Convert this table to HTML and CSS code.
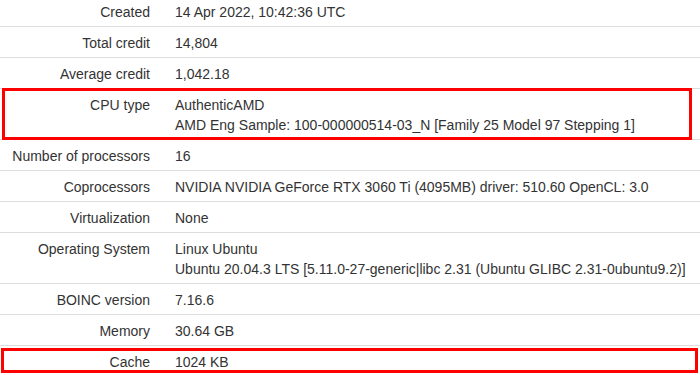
FILE: index.html
```html
<!DOCTYPE html>
<html>
<head>
<meta charset="utf-8">
<link rel="stylesheet" href="styles.css">
</head>
<body>
<div class="sheet">
  <table class="info">
    <tr><th>Created</th><td>14 Apr 2022, 10:42:36 UTC</td></tr>
    <tr><th>Total credit</th><td>14,804</td></tr>
    <tr><th>Average credit</th><td>1,042.18</td></tr>
    <tr><th>CPU type</th><td>AuthenticAMD<br>AMD Eng Sample: 100-000000514-03_N [Family 25 Model 97 Stepping 1]</td></tr>
    <tr><th>Number of processors</th><td>16</td></tr>
    <tr><th>Coprocessors</th><td>NVIDIA NVIDIA GeForce RTX 3060 Ti (4095MB) driver: 510.60 OpenCL: 3.0</td></tr>
    <tr><th>Virtualization</th><td>None</td></tr>
    <tr><th>Operating System</th><td>Linux Ubuntu<br>Ubuntu 20.04.3 LTS [5.11.0-27-generic|libc 2.31 (Ubuntu GLIBC 2.31-0ubuntu9.2)]</td></tr>
    <tr><th>BOINC version</th><td>7.16.6</td></tr>
    <tr><th>Memory</th><td>30.64 GB</td></tr>
    <tr><th>Cache</th><td>1024 KB</td></tr>
  </table>
  <div class="mark mark-cpu"></div>
  <div class="mark mark-cache"></div>
</div>
</body>
</html>
```
FILE: styles.css
```css
html, body {
  margin: 0;
  padding: 0;
  background: #fff;
  overflow: hidden;
}
.sheet {
  position: relative;
  width: 700px;
  height: 375px;
  overflow: hidden;
}
.info {
  width: 700px;
  border-collapse: collapse;
  margin-top: -5px;
  font-family: "Liberation Sans", Arial, sans-serif;
  font-size: 14px;
  line-height: 20px;
  color: #333;
}
.info th,
.info td {
  border-top: 1px solid #ddd;
  padding: 6px 5px 4px 0;
  vertical-align: top;
  text-align: left;
  font-weight: normal;
  white-space: nowrap;
}
.info th {
  width: 145px;
  padding: 6px 25px 4px 5px;
  text-align: right;
}
.mark {
  position: absolute;
  box-sizing: border-box;
  border: 3px solid #ff0000;
}
.mark-cpu {
  left: 2px;
  top: 88px;
  width: 690px;
  height: 52px;
}
.mark-cache {
  left: 1px;
  top: 348px;
  width: 697px;
  height: 25px;
}
```
